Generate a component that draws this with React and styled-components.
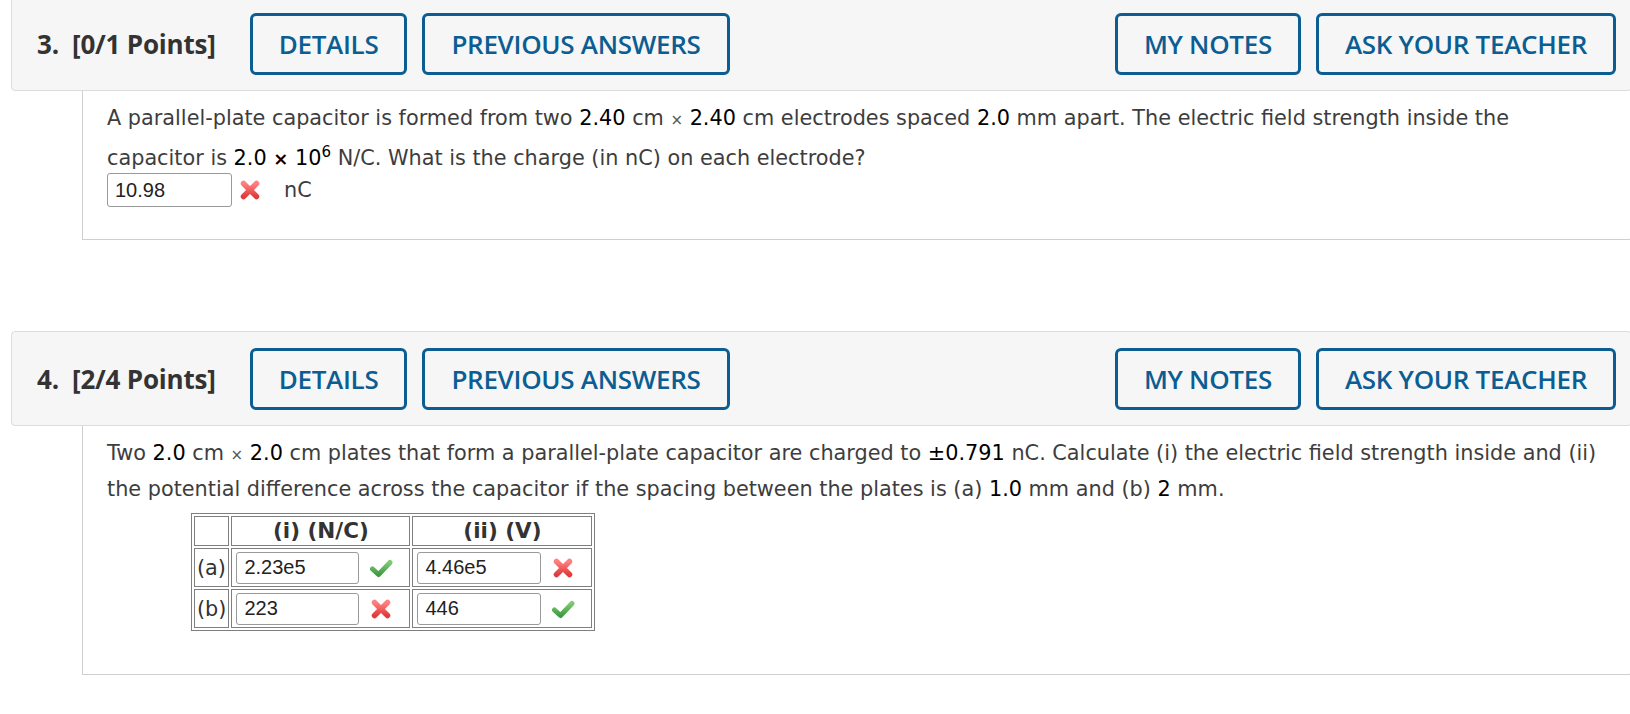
import styled, { createGlobalStyle } from "styled-components";

const GlobalStyle = createGlobalStyle`
  html, body {
    margin: 0;
    padding: 0;
    background: #fff;
    overflow: hidden;
  }
`;

const questions = [
  { number: 3, points: "0/1" },
  { number: 4, points: "2/4" },
];

function CrossIcon({ size = 22 }) {
  return (
    <svg width={size} height={size} viewBox="0 0 22 22">
      <defs>
        <linearGradient id="crossGrad" x1="0" y1="0" x2="0" y2="1">
          <stop offset="0" stopColor="#ff8080" />
          <stop offset="1" stopColor="#e23b3b" />
        </linearGradient>
      </defs>
      <path
        d="M4.5 4.5 L17.5 17.5 M17.5 4.5 L4.5 17.5"
        stroke="url(#crossGrad)"
        strokeWidth="5.5"
        strokeLinecap="round"
        fill="none"
      />
    </svg>
  );
}

function CheckIcon({ size = 24 }) {
  return (
    <svg width={size} height={size} viewBox="0 0 24 24">
      <defs>
        <linearGradient id="checkGrad" x1="0" y1="0" x2="0" y2="1">
          <stop offset="0" stopColor="#7ccb6f" />
          <stop offset="1" stopColor="#3f9c45" />
        </linearGradient>
      </defs>
      <path
        d="M3.5 13 L9.5 18.5 L21 6.5"
        stroke="url(#checkGrad)"
        strokeWidth="5"
        strokeLinecap="round"
        strokeLinejoin="round"
        fill="none"
      />
    </svg>
  );
}

function Mark({ ok }) {
  return <IconSlot>{ok ? <CheckIcon /> : <CrossIcon />}</IconSlot>;
}

function QuestionHeader({ number, points }) {
  return (
    <Header>
      <Points>
        {number}.&nbsp; [{points} Points]
      </Points>
      <ActionButton>DETAILS</ActionButton>
      <ActionButton>PREVIOUS ANSWERS</ActionButton>
      <Spacer />
      <ActionButton>MY NOTES</ActionButton>
      <ActionButton>ASK YOUR TEACHER</ActionButton>
    </Header>
  );
}

export default function App() {
  return (
    <Page>
      <GlobalStyle />
      <Card $first>
        <QuestionHeader {...questions[0]} />
        <Body $top={10} $bottom={32}>
          <Text>
            A parallel-plate capacitor is formed from two <Num>2.40</Num> cm <Times>×</Times>{" "}
            <Num>2.40</Num> cm electrodes spaced <Num>2.0</Num> mm apart. The electric field strength
            inside the
            <br />
            capacitor is <Num>2.0 <BoldTimes>×</BoldTimes> 10<sup>6</sup></Num> N/C. What is the
            charge (in nC) on each electrode?
          </Text>
          <AnswerRow>
            <AnswerInput $w={125} $h={34} defaultValue="10.98" />
            <CrossWrap>
              <CrossIcon />
            </CrossWrap>
            <Unit>nC</Unit>
          </AnswerRow>
        </Body>
      </Card>

      <Card>
        <QuestionHeader {...questions[1]} />
        <Body $top={10} $bottom={43}>
          <Text>
            Two <Num>2.0</Num> cm <Times>×</Times> <Num>2.0</Num> cm plates that form a parallel-plate
            capacitor are charged to <Num>±0.791</Num> nC. Calculate (i) the electric field strength
            inside and (ii)
            <br />
            the potential difference across the capacitor if the spacing between the plates is (a){" "}
            <Num>1.0</Num> mm and (b) <Num>2</Num> mm.
          </Text>
          <AnswerTable>
            <tbody>
              <tr>
                <EmptyCell />
                <HeadCell>(i) (N/C)</HeadCell>
                <HeadCell>(ii) (V)</HeadCell>
              </tr>
              <tr>
                <LabelCell>(a)</LabelCell>
                <Cell>
                  <CellRow>
                    <AnswerInput $w={123} $h={32} defaultValue="2.23e5" />
                    <Mark ok />
                  </CellRow>
                </Cell>
                <Cell>
                  <CellRow>
                    <AnswerInput $w={124} $h={32} defaultValue="4.46e5" />
                    <Mark />
                  </CellRow>
                </Cell>
              </tr>
              <tr>
                <LabelCell>(b)</LabelCell>
                <Cell>
                  <CellRow>
                    <AnswerInput $w={123} $h={32} defaultValue="223" />
                    <Mark />
                  </CellRow>
                </Cell>
                <Cell>
                  <CellRow>
                    <AnswerInput $w={124} $h={32} defaultValue="446" />
                    <Mark ok />
                  </CellRow>
                </Cell>
              </tr>
            </tbody>
          </AnswerTable>
        </Body>
      </Card>
    </Page>
  );
}

const Page = styled.div`
  width: 1630px;
  padding-left: 11px;
  box-sizing: border-box;
`;

const Card = styled.section`
  width: 1621px;
  margin-top: ${(p) => (p.$first ? "-4px" : "91px")};
`;

const Header = styled.div`
  display: flex;
  align-items: center;
  gap: 15px;
  height: 95px;
  box-sizing: border-box;
  padding: 0 15px 0 25px;
  background: #f6f6f6;
  border: 1px solid #dcdcdc;
  border-radius: 4px;
`;

const Points = styled.span`
  font-family: "Open Sans", "DejaVu Sans", sans-serif;
  font-weight: 700;
  font-size: 26px;
  color: #333;
  margin-right: 19px;
  letter-spacing: -0.2px;
`;

const Spacer = styled.div`
  flex: 1;
`;

const ActionButton = styled.button`
  height: 62px;
  padding: 0 26px;
  box-sizing: border-box;
  background: transparent;
  border: 3px solid #0b5d92;
  border-radius: 6px;
  color: #0b5d92;
  font-family: "Open Sans", sans-serif;
  font-weight: 600;
  font-size: 26px;
  letter-spacing: -0.3px;
  cursor: pointer;
`;

const Body = styled.div`
  margin-left: 71px;
  padding: ${(p) => p.$top}px 0 ${(p) => p.$bottom}px 24px;
  border: 1px solid #cfcfcf;
  border-top: none;
  border-bottom-right-radius: 4px;
  font-family: "DejaVu Sans", Verdana, sans-serif;
  font-size: 20.8px;
  color: #3d3d3d;
`;

const Text = styled.p`
  margin: 0;
  line-height: 34px;
  white-space: nowrap;

  sup {
    font-size: 15px;
    line-height: 30px;
    vertical-align: 8px;
  }
`;

const Num = styled.span`
  color: #000;
`;

const Times = styled.span`
  font-size: 15px;
  color: #555;
`;

const BoldTimes = styled.span`
  font-weight: 700;
  font-size: 18px;
`;

const AnswerRow = styled.div`
  display: flex;
  align-items: center;
  margin-top: -3px;
`;

const AnswerInput = styled.input`
  width: ${(p) => p.$w}px;
  height: ${(p) => p.$h}px;
  box-sizing: border-box;
  padding: 0 7px;
  border: 1px solid #9a9a9a;
  border-radius: 3px;
  font-family: "Liberation Sans", Arial, sans-serif;
  font-size: 20px;
  color: #222;
  background: #fff;
  outline: none;
`;

const CrossWrap = styled.span`
  display: flex;
  margin-left: 7px;
  margin-right: 23px;
`;

const Unit = styled.span`
  line-height: 34px;
`;

const AnswerTable = styled.table`
  margin: 7px 0 0 84px;
  border: 1px solid #7f7f7f;
  border-spacing: 2px;
  color: #333;
`;

const Cell = styled.td`
  border: 1px solid #7f7f7f;
  padding: 2px 6px 2px 4px;
  height: 33px;
`;

const EmptyCell = styled.td`
  border: 1px solid #7f7f7f;
  padding: 0;
`;

const HeadCell = styled.td`
  border: 1px solid #7f7f7f;
  height: 28px;
  padding: 0;
  text-align: center;
  font-weight: 700;
  font-size: 21.5px;
  line-height: 28px;
`;

const LabelCell = styled.td`
  border: 1px solid #7f7f7f;
  padding: 0 2px;
  font-size: 20.8px;
`;

const CellRow = styled.div`
  display: flex;
  align-items: center;
`;

const IconSlot = styled.span`
  display: flex;
  justify-content: center;
  width: 44px;
`;
